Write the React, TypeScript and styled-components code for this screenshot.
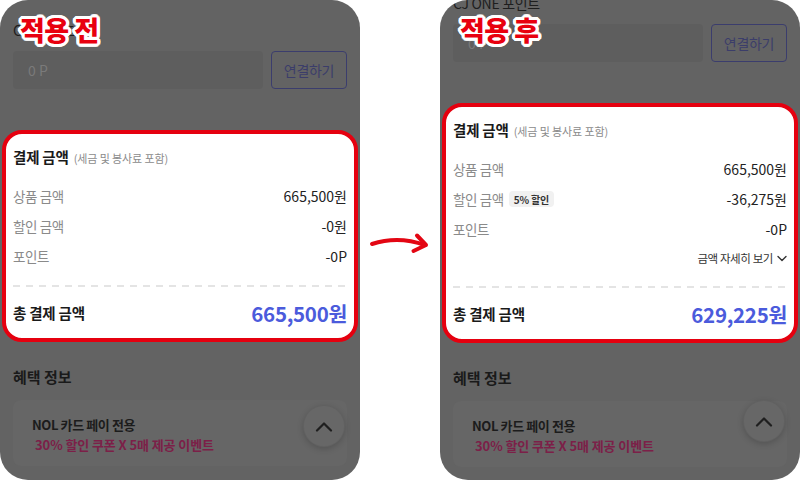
import React from "react";
import styled, { createGlobalStyle } from "styled-components";

const Global = createGlobalStyle`
  html, body { margin: 0; padding: 0; background: #fff; }
  body { font-family: "Noto Sans CJK KR", "Noto Sans", sans-serif; }
  * { box-sizing: border-box; }
`;

const Page = styled.div`
  width: 800px;
  height: 480px;
  display: flex;
  align-items: center;
  background: #fff;
`;

const Panel = styled.section`
  position: relative;
  flex: none;
  width: 360px;
  height: 480px;
  background: #636363;
  border-radius: 28px;
  overflow: hidden;
`;

const Content = styled.div<{ $offset: number }>`
  display: flex;
  flex-direction: column;
  padding: 0 13px;
  margin-top: ${(p) => p.$offset}px;
`;

const FieldLabel = styled.div`
  font-size: 14px;
  line-height: 18px;
  color: #1e1e1e;
  letter-spacing: -0.3px;
`;

const PointRow = styled.div`
  display: flex;
  gap: 8px;
  height: 38px;
  margin-top: 12px;
`;

const PointInput = styled.div`
  flex: 1;
  display: flex;
  align-items: center;
  padding-left: 15px;
  background: #5e5e5e;
  border-radius: 4px;
  font-size: 14px;
  color: #7a7a7a;
`;

const ConnectButton = styled.button`
  width: 76px;
  border: 1px solid #3b3d6d;
  border-radius: 4px;
  background: transparent;
  color: #3b3d6a;
  font-family: inherit;
  font-size: 14px;
  letter-spacing: -0.3px;
  padding: 0;
`;

const Card = styled.div`
  margin: 41px -11px 0;
  border: 4px solid #e5000f;
  border-radius: 20px;
  background: #fff;
  padding: 13px 7px 11px;
  display: flex;
  flex-direction: column;
`;

const CardTitle = styled.div`
  display: flex;
  align-items: baseline;
  gap: 5px;
  height: 20px;
`;

const TitleText = styled.span`
  font-size: 14.5px;
  font-weight: 700;
  color: #1a1a1a;
  letter-spacing: -0.2px;
  line-height: 20px;
`;

const SubText = styled.span`
  font-size: 11px;
  color: #8b8b8b;
  letter-spacing: -0.1px;
`;

const Rows = styled.div`
  margin-top: 14px;
  display: flex;
  flex-direction: column;
`;

const Row = styled.div`
  display: flex;
  justify-content: space-between;
  align-items: center;
  height: 30px;
`;

const RowLabel = styled.span`
  display: flex;
  align-items: center;
  gap: 5px;
  font-size: 13.5px;
  color: #8a8a8a;
  letter-spacing: -0.4px;
`;

const RowValue = styled.span`
  font-size: 14px;
  color: #222;
  letter-spacing: 0;
`;

const Badge = styled.span`
  display: inline-flex;
  align-items: center;
  height: 16px;
  padding: 0 5px;
  border-radius: 4px;
  background: #f1f1f1;
  color: #333;
  font-size: 10px;
  font-weight: 700;
  letter-spacing: -0.2px;
`;

const DetailRow = styled.div`
  display: flex;
  justify-content: flex-end;
  align-items: center;
  gap: 4px;
  height: 28px;
  font-size: 11.5px;
  color: #333;
  letter-spacing: -0.4px;
`;

const Divider = styled.div`
  margin-top: 14px;
  height: 2px;
  background: repeating-linear-gradient(to right, #e4e4e4 0 7px, transparent 7px 13px);
`;

const TotalRow = styled.div`
  margin-top: 12px;
  height: 28px;
  display: flex;
  justify-content: space-between;
  align-items: center;
`;

const TotalValue = styled.span`
  font-size: 20.5px;
  font-weight: 700;
  color: #4b5bdc;
  letter-spacing: -0.3px;
`;

const SectionTitle = styled.div`
  margin-top: 25px;
  font-size: 15px;
  font-weight: 700;
  line-height: 20px;
  color: #1a1a1a;
  letter-spacing: 0;
`;

const Banner = styled.div`
  margin-top: 13px;
  height: 66px;
  border-radius: 8px;
  background: #666;
  padding: 16px 19px 0;
  display: flex;
  flex-direction: column;
`;

const BannerTitle = styled.div`
  font-size: 13px;
  font-weight: 700;
  line-height: 18px;
  color: #1c1c1c;
  letter-spacing: -0.4px;
`;

const BannerEvent = styled.div`
  margin-top: 1px;
  padding-left: 3px;
  font-size: 13px;
  font-weight: 700;
  line-height: 20px;
  color: #7c2048;
  letter-spacing: -0.1px;
`;

const FloatButton = styled.button<{ $bottom: number }>`
  position: absolute;
  right: 15px;
  bottom: ${(p) => p.$bottom}px;
  width: 42px;
  height: 42px;
  border-radius: 50%;
  border: 1px solid rgba(0, 0, 0, 0.05);
  background: #676767;
  box-shadow: 0 2px 6px rgba(0, 0, 0, 0.18);
  display: flex;
  align-items: center;
  justify-content: center;
  padding: 0;
`;

const Tag = styled.div`
  position: absolute;
  left: 20px;
  top: 13px;
  font-size: 27px;
  font-weight: 900;
  line-height: 34px;
  color: #e8000f;
  letter-spacing: -0.5px;
  text-shadow:
    3px 0 #fff, -3px 0 #fff, 0 3px #fff, 0 -3px #fff,
    2px 2px #fff, -2px 2px #fff, 2px -2px #fff, -2px -2px #fff,
    3px 1px #fff, -3px 1px #fff, 3px -1px #fff, -3px -1px #fff,
    1px 3px #fff, -1px 3px #fff, 1px -3px #fff, -1px -3px #fff;
`;

const ArrowCol = styled.div`
  flex: none;
  width: 80px;
  height: 30px;
  margin-top: 1px;
`;

type Props = {
  tag: string;
  offset: number;
  discount: string;
  total: string;
  applied: boolean;
  floatBottom: number;
};

function Phone({ tag, offset, discount, total, applied, floatBottom }: Props) {
  return (
    <Panel>
      <Content $offset={offset}>
        <FieldLabel>CJ ONE 포인트</FieldLabel>
        <PointRow>
          <PointInput>0 P</PointInput>
          <ConnectButton>연결하기</ConnectButton>
        </PointRow>
        <Card>
          <CardTitle>
            <TitleText>결제 금액</TitleText>
            <SubText>(세금 및 봉사료 포함)</SubText>
          </CardTitle>
          <Rows>
            <Row>
              <RowLabel>상품 금액</RowLabel>
              <RowValue>665,500원</RowValue>
            </Row>
            <Row>
              <RowLabel>
                할인 금액
                {applied && <Badge>5% 할인</Badge>}
              </RowLabel>
              <RowValue>{discount}</RowValue>
            </Row>
            <Row>
              <RowLabel>포인트</RowLabel>
              <RowValue>-0P</RowValue>
            </Row>
            {applied && (
              <DetailRow>
                금액 자세히 보기
                <svg width="10" height="7" viewBox="0 0 10 7">
                  <polyline points="1,1.5 5,5.5 9,1.5" fill="none" stroke="#333" strokeWidth="1.4" strokeLinecap="round" strokeLinejoin="round" />
                </svg>
              </DetailRow>
            )}
          </Rows>
          <Divider />
          <TotalRow>
            <TitleText>총 결제 금액</TitleText>
            <TotalValue>{total}</TotalValue>
          </TotalRow>
        </Card>
        <SectionTitle>혜택 정보</SectionTitle>
        <Banner>
          <BannerTitle>NOL 카드 페이 전용</BannerTitle>
          <BannerEvent>30% 할인 쿠폰 X 5매 제공 이벤트</BannerEvent>
        </Banner>
      </Content>
      <FloatButton $bottom={floatBottom} aria-label="위로">
        <svg width="18" height="11" viewBox="0 0 18 11">
          <polyline points="2,9.5 9,2.5 16,9.5" fill="none" stroke="#1f1f1f" strokeWidth="2.2" strokeLinecap="round" strokeLinejoin="round" />
        </svg>
      </FloatButton>
      <Tag>{tag}</Tag>
    </Panel>
  );
}

export default function App() {
  return (
    <>
      <Global />
      <Page>
        <Phone tag="적용 전" offset={21} discount="-0원" total="665,500원" applied={false} floatBottom={33} />
        <ArrowCol>
          <svg width="80" height="30" viewBox="0 0 80 30">
            <path d="M12 18 Q 38 9.5 65 19" fill="none" stroke="#e30613" strokeWidth="4" strokeLinecap="round" />
            <path d="M57 9.5 L66 19 L53.5 25" fill="none" stroke="#e30613" strokeWidth="4" strokeLinecap="round" strokeLinejoin="round" />
          </svg>
        </ArrowCol>
        <Phone tag="적용 후" offset={-6} discount="-36,275원" total="629,225원" applied={true} floatBottom={38} />
      </Page>
    </>
  );
}
